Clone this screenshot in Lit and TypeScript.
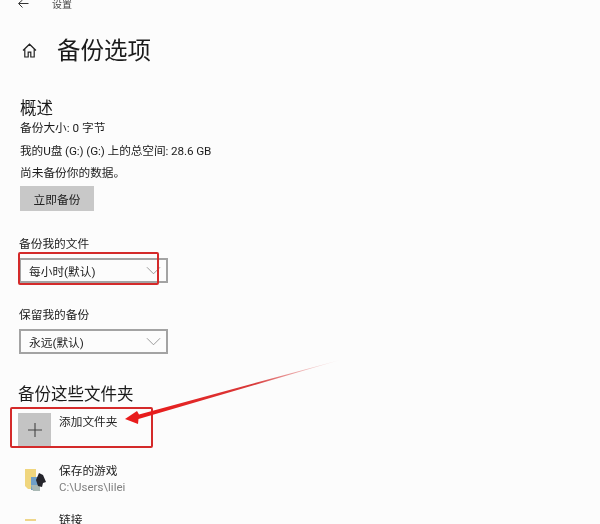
import { LitElement, html, css, svg } from "lit";
import { customElement } from "lit/decorators.js";

const chevron = html`<svg class="chev" viewBox="0 0 16 9" width="15" height="9"><path d="M1 1l7 7 7-7" fill="none" stroke="#8a8a8a" stroke-width="0.9"/></svg>`;

@customElement("app-root")
export class AppRoot extends LitElement {
  static styles = css`
    :host {
      display: block;
      position: relative;
      width: 600px;
      height: 524px;
      overflow: hidden;
      background: #fcfcfc;
      color: #1c1c1c;
      font-family: Roboto, "Noto Sans CJK SC", sans-serif;
      font-size: 12px;
      filter: blur(0.3px);
    }
    .page { display: flex; flex-direction: column; padding: 0 0 0 19px; }
    .top { display: flex; align-items: center; height: 9px; gap: 23px; margin-left: -2px; }
    .top svg { flex: none; }
    .top span { font-size: 10px; line-height: 9px; color: #444; }
    .title-row { display: flex; align-items: center; gap: 20px; margin: 26px 0 0 3px; height: 30px; }
    h1 { margin: 0; font-size: 23.5px; font-weight: 400; line-height: 32px; height: 30px; color: #1a1a1a; }
    h2 { margin: 0; font-weight: 400; color: #1a1a1a; }
    .overview { font-size: 16.5px; line-height: 22px; height: 20px; margin: 33px 0 0 1px; }
    .line { line-height: 18px; height: 16px; font-size: 11.7px; white-space: nowrap; color: #1c1c1c; margin-left: 1px; }
    .l1 { margin-top: 1px; }
    .l2, .l3 { margin-top: 6.5px; }
    .l2 { letter-spacing: -0.1px; }
    .btn {
      box-sizing: border-box; width: 74px; height: 25px; margin: 6px 0 0 1px; background: #c8c8c8;
      display: flex; align-items: center; justify-content: center; font-size: 11.7px; color: #222;
    }
    .label { line-height: 18px; height: 16px; font-size: 11.7px; color: #222; }
    .select {
      box-sizing: border-box; width: 149px; height: 25px; border: 2px solid #a3a3a3;
      display: flex; align-items: center; justify-content: space-between;
      padding: 0 3px 0 8px; font-size: 11.7px; color: #222; margin-top: 7px;
    }
    .chev { margin-right: 2px; }
    .folders { font-size: 16.5px; line-height: 22px; margin: 30px 0 0 -1px; }
    .add { display: flex; gap: 8px; margin: 7px 0 0 -1px; height: 33px; }
    .tile { width: 33px; height: 33px; background: #c4c4c4; display: flex; align-items: center; justify-content: center; }
    .add-text { font-size: 11.7px; line-height: 18px; height: 16px; color: #222; }
    .item { display: flex; gap: 13px; margin: 16px 0 0 6px; height: 35px; }
    .item svg { flex: none; margin-top: 7px; }
    .item-text { display: flex; flex-direction: column; padding-top: 1px; }
    .item-name { font-size: 11.7px; line-height: 16px; color: #222; }
    .item-path { font-size: 11.5px; line-height: 16px; color: #808080; }
    .item2 { margin-top: 14px; }
    .mark { position: absolute; box-sizing: border-box; border: 2px solid #d42a2a; border-radius: 2px; pointer-events: none; }
    .m1 { left: 18px; top: 252px; width: 141px; height: 33px; }
    .m2 { left: 10px; top: 407px; width: 143px; height: 41px; }
    .arrow { position: absolute; left: 0; top: 0; pointer-events: none; }
  `;

  render() {
    return html`
      <div class="page">
        <div class="top">
          <svg width="12" height="9" viewBox="0 0 12 9"><path d="M11.5 3.5H2M5.5 0L1.5 3.5 5.5 7.5" fill="none" stroke="#333" stroke-width="1"/></svg>
          <span>设置</span>
        </div>
        <div class="title-row">
          <svg width="15" height="15" viewBox="0 0 15 15"><path d="M1 7.5L7.5 1.2 14 7.5M2.8 6v8h3.4V9.2h2.6V14h3.4V6" fill="none" stroke="#222" stroke-width="1.2"/></svg>
          <h1>备份选项</h1>
        </div>
        <h2 class="overview">概述</h2>
        <div class="line l1">备份大小: 0 字节</div>
        <div class="line l2">我的U盘 (G:) (G:) 上的总空间: 28.6 GB</div>
        <div class="line l3">尚未备份你的数据。</div>
        <div class="btn">立即备份</div>
        <div class="label" style="margin-top:24px">备份我的文件</div>
        <div class="select"><span>每小时(默认)</span>${chevron}</div>
        <div class="label" style="margin-top:23px">保留我的备份</div>
        <div class="select"><span>永远(默认)</span>${chevron}</div>
        <h2 class="folders">备份这些文件夹</h2>
        <div class="add">
          <div class="tile"><svg width="14" height="14" viewBox="0 0 14 14"><path d="M7 0v14M0 7h14" stroke="#444" stroke-width="1.1"/></svg></div>
          <div class="add-text">添加文件夹</div>
        </div>
        <div class="item">
          <svg width="21" height="23" viewBox="0 0 21 23">
            <path d="M0 0h11v20H3L0 17z" fill="#f0d67e"/>
            <rect x="6" y="8" width="8" height="13" fill="#6f9fc8"/>
            <path d="M6 16h9v6H8z" fill="#a9b8b4"/>
            <path d="M14 4l4 2 3 7-3 1-1 4-4-1-2-6z" fill="#25252c"/>
          </svg>
          <div class="item-text">
            <span class="item-name">保存的游戏</span>
            <span class="item-path">C:\\Users\\lilei</span>
          </div>
        </div>
        <div class="item item2">
          <svg width="21" height="12" viewBox="0 0 21 12" style="margin-top:8px"><rect x="0" y="0" width="11" height="2" fill="#eed68a"/></svg>
          <div class="item-text"><span class="item-name">链接</span></div>
        </div>
      </div>
      <div class="mark m1"></div>
      <div class="mark m2"></div>
      <svg class="arrow" width="600" height="524" viewBox="0 0 600 524">
        ${svg`<defs><linearGradient id="g" x1="340" y1="360" x2="150" y2="412" gradientUnits="userSpaceOnUse">
          <stop offset="0" stop-color="#eebbbb" stop-opacity="0.3"/>
          <stop offset="0.45" stop-color="#d83a3a"/>
          <stop offset="1" stop-color="#e81c1c"/>
        </linearGradient></defs>
        <path d="M340 360L139 414.5 137 411 125 419 138 424 138.5 419z" fill="url(#g)"/>`}
      </svg>
    `;
  }
}
